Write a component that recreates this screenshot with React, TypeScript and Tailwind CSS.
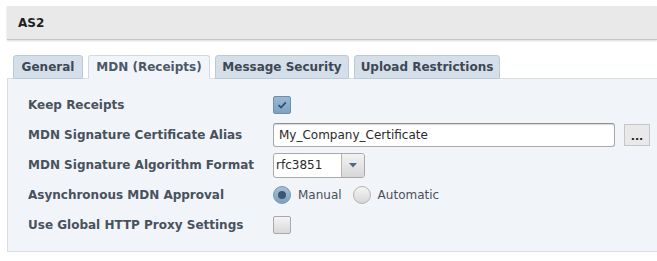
const font = "font-['DejaVu_Sans',Verdana,sans-serif]"

function Tab({ label, active, width }: { label: string; active?: boolean; width: string }) {
  return (
    <div
      className={`${width} h-[24px] -mb-px flex items-center justify-center rounded-t-[3px] border text-[12px] font-bold ${
        active
          ? 'bg-[#f1f4f9] border-[#d3d9e0] border-b-[#f1f4f9] text-[#4b5868]'
          : 'bg-[#d4dfea] border-[#bccad7] text-[#3e4853]'
      }`}
    >
      {label}
    </div>
  )
}

function Row({ label, children }: { label: string; children: React.ReactNode }) {
  return (
    <div className="h-[30px] flex items-center">
      <div className="w-[245px] text-[12px] font-bold text-[#48525d]">{label}</div>
      <div className="flex-1 flex items-center">{children}</div>
    </div>
  )
}

function CheckBox({ checked }: { checked?: boolean }) {
  if (checked) {
    return (
      <div className="w-[18px] h-[18px] rounded-[2px] border border-[#6d8fae] bg-gradient-to-b from-[#9ab8d3] to-[#7fa1c0] flex items-center justify-center">
        <svg width="10" height="8" viewBox="0 0 10 8">
          <path d="M1.5 4.2 L4 6.5 L8.8 1.3" fill="none" stroke="#34526f" strokeWidth="1.8" />
        </svg>
      </div>
    )
  }
  return (
    <div className="w-[18px] h-[18px] rounded-[2px] border border-[#a9a9a9] bg-gradient-to-b from-[#f4f4f4] to-[#d8d8d8]" />
  )
}

function Radio({ checked }: { checked?: boolean }) {
  if (checked) {
    return (
      <div className="w-[18px] h-[18px] rounded-full border border-[#7796b3] bg-gradient-to-b from-[#a6c1d8] to-[#7e9fbd] flex items-center justify-center">
        <div className="w-[8px] h-[8px] rounded-full bg-[#3a5876]" />
      </div>
    )
  }
  return (
    <div className="w-[18px] h-[18px] rounded-full border border-[#b3b3b3] bg-gradient-to-b from-[#f5f5f5] to-[#d6d6d6]" />
  )
}

export default function App() {
  return (
    <div className={`w-[657px] h-[261px] bg-white pt-[6px] pl-[7px] overflow-hidden ${font}`}>
      {/* header */}
      <div className="h-[34px] bg-[#e9e9e9] border-b border-[#c4c4c4] shadow-[0_1px_2px_rgba(0,0,0,0.15)] flex items-center pl-[11px]">
        <span className="text-[12px] font-bold text-[#1e1e1e]">AS2</span>
      </div>

      {/* tabs */}
      <div className="mt-[15px] pl-[6px] flex gap-[5px] relative z-10">
        <Tab label="General" width="w-[70px]" />
        <Tab label="MDN (Receipts)" width="w-[122px]" active />
        <Tab label="Message Security" width="w-[134px]" />
        <Tab label="Upload Restrictions" width="w-[146px]" />
      </div>

      {/* panel */}
      <div className="bg-[#f1f4f9] border border-[#d8dde3] border-r-0 pt-[11px] pb-[11px] pl-[20px]">
        <Row label="Keep Receipts">
          <CheckBox checked />
        </Row>
        <Row label="MDN Signature Certificate Alias">
          <div className="w-[342px] h-[24px] rounded-[3px] border border-[#a9a9a9] border-t-[#8f8f8f] bg-white shadow-[inset_0_1px_1px_rgba(0,0,0,0.15)] flex items-center pl-[5px] text-[12px] text-[#2b2b2b]">
            My_Company_Certificate
          </div>
          <div className="ml-[9px] w-[26px] h-[22px] border border-[#c6c6c6] bg-[#e9e9e9] flex items-end justify-center pb-[3px]">
            <span className="text-[11px] font-bold leading-none text-[#222]">...</span>
          </div>
        </Row>
        <Row label="MDN Signature Algorithm Format">
          <div className="h-[25px] w-[92px] rounded-[3px] border border-[#a9a9a9] bg-white flex overflow-hidden">
            <div className="flex-1 flex items-center pl-[2px] text-[12px] text-[#2b2b2b]">rfc3851</div>
            <div className="w-[23px] border-l border-[#b5b5b5] bg-gradient-to-b from-[#f3f3f3] to-[#d7d7d7] flex items-center justify-center">
              <svg width="8" height="5" viewBox="0 0 8 5">
                <path d="M0 0 L8 0 L4 4.5 Z" fill="#4a6987" />
              </svg>
            </div>
          </div>
        </Row>
        <Row label="Asynchronous MDN Approval">
          <Radio checked />
          <span className="ml-[7px] text-[12px] text-[#4a5058]">Manual</span>
          <div className="ml-[11px]">
            <Radio />
          </div>
          <span className="ml-[7px] text-[12px] text-[#4a5058]">Automatic</span>
        </Row>
        <Row label="Use Global HTTP Proxy Settings">
          <CheckBox />
        </Row>
      </div>
    </div>
  )
}
